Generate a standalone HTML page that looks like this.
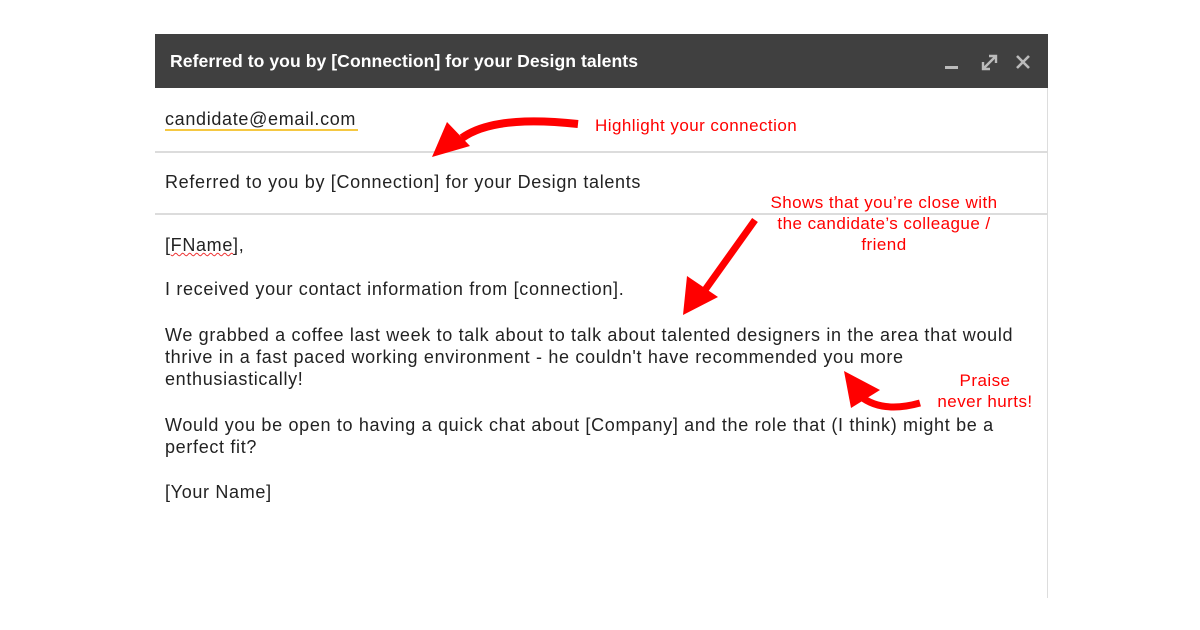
<!DOCTYPE html>
<html><head><style>
body{margin:0;width:1200px;height:630px;background:#fff;position:relative;overflow:hidden;font-family:"Liberation Sans",Arial,sans-serif;}
.hdr{position:absolute;left:155px;top:34px;width:893px;height:54px;background:#404040;color:#fff;font-size:17.6px;font-weight:bold;}
.hdr span{position:absolute;left:15px;top:17px;letter-spacing:0.05px;}
.t{position:absolute;font-size:18px;letter-spacing:0.67px;color:#222;white-space:nowrap;}
.line{position:absolute;left:155px;width:893px;height:2px;background:#dcdcdc;}
.r{position:absolute;color:#f00;font-size:17px;letter-spacing:0.45px;text-align:center;line-height:21px;white-space:nowrap;}
</style></head><body>
<div class="hdr"><span>Referred to you by [Connection] for your Design talents</span>
<svg style="position:absolute;left:785px;top:14px" width="100" height="28">
<rect x="5" y="18" width="13" height="3" fill="#bbb"/>
<path d="M43 21 L56 8 M49 8 H56 V15 M43 14 V21 H50" stroke="#bbb" stroke-width="2.4" fill="none"/>
<path d="M77 8 L89 20 M89 8 L77 20" stroke="#bbb" stroke-width="2.6"/>
</svg></div>
<div style="position:absolute;left:1047px;top:88px;width:1px;height:510px;background:#ddd"></div>
<div class="t" style="left:165px;top:109px">candidate@email.com</div>
<div style="position:absolute;left:165px;top:129px;width:193px;height:2px;background:#f5c842"></div>
<div class="line" style="top:151px"></div>
<div class="t" style="left:165px;top:172px">Referred to you by [Connection] for your Design talents</div>
<div class="line" style="top:213px"></div>
<div class="t" style="left:165px;top:235px">[<span style="text-decoration:underline wavy #e33;text-decoration-thickness:1px">FName</span>],</div>
<div class="t" style="left:165px;top:279px">I received your contact information from [connection].</div>
<div class="t" style="left:165px;top:324px;line-height:22px">We grabbed a coffee last week to talk about to talk about talented designers in the area that would<br>thrive in a fast paced working environment - he couldn't have recommended you more<br>enthusiastically!</div>
<div class="t" style="left:165px;top:414px;line-height:22px">Would you be open to having a quick chat about [Company] and the role that (I think) might be a<br>perfect fit?</div>
<div class="t" style="left:165px;top:482px">[Your Name]</div>
<div class="r" style="left:595px;top:115px">Highlight your connection</div>
<div class="r" style="left:760px;top:192px;width:248px">Shows that you’re close with<br>the candidate’s colleague /<br>friend</div>
<div class="r" style="left:930px;top:370px;width:110px">Praise<br>never hurts!</div>
<svg style="position:absolute;left:0;top:0" width="1200" height="630">
<path d="M578 124 C540 120 490 118 462 138" stroke="#f00" stroke-width="8" fill="none"/>
<polygon points="432,157 447,122 470,146" fill="#f00"/>
<path d="M755 220 L705 290" stroke="#f00" stroke-width="7" fill="none"/>
<polygon points="683,315 687,276 718,297" fill="#f00"/>
<path d="M920 403 C895 410 875 408 860 396" stroke="#f00" stroke-width="7" fill="none"/>
<polygon points="844,371 880,390 851,408" fill="#f00"/>
</svg>
</body></html>
